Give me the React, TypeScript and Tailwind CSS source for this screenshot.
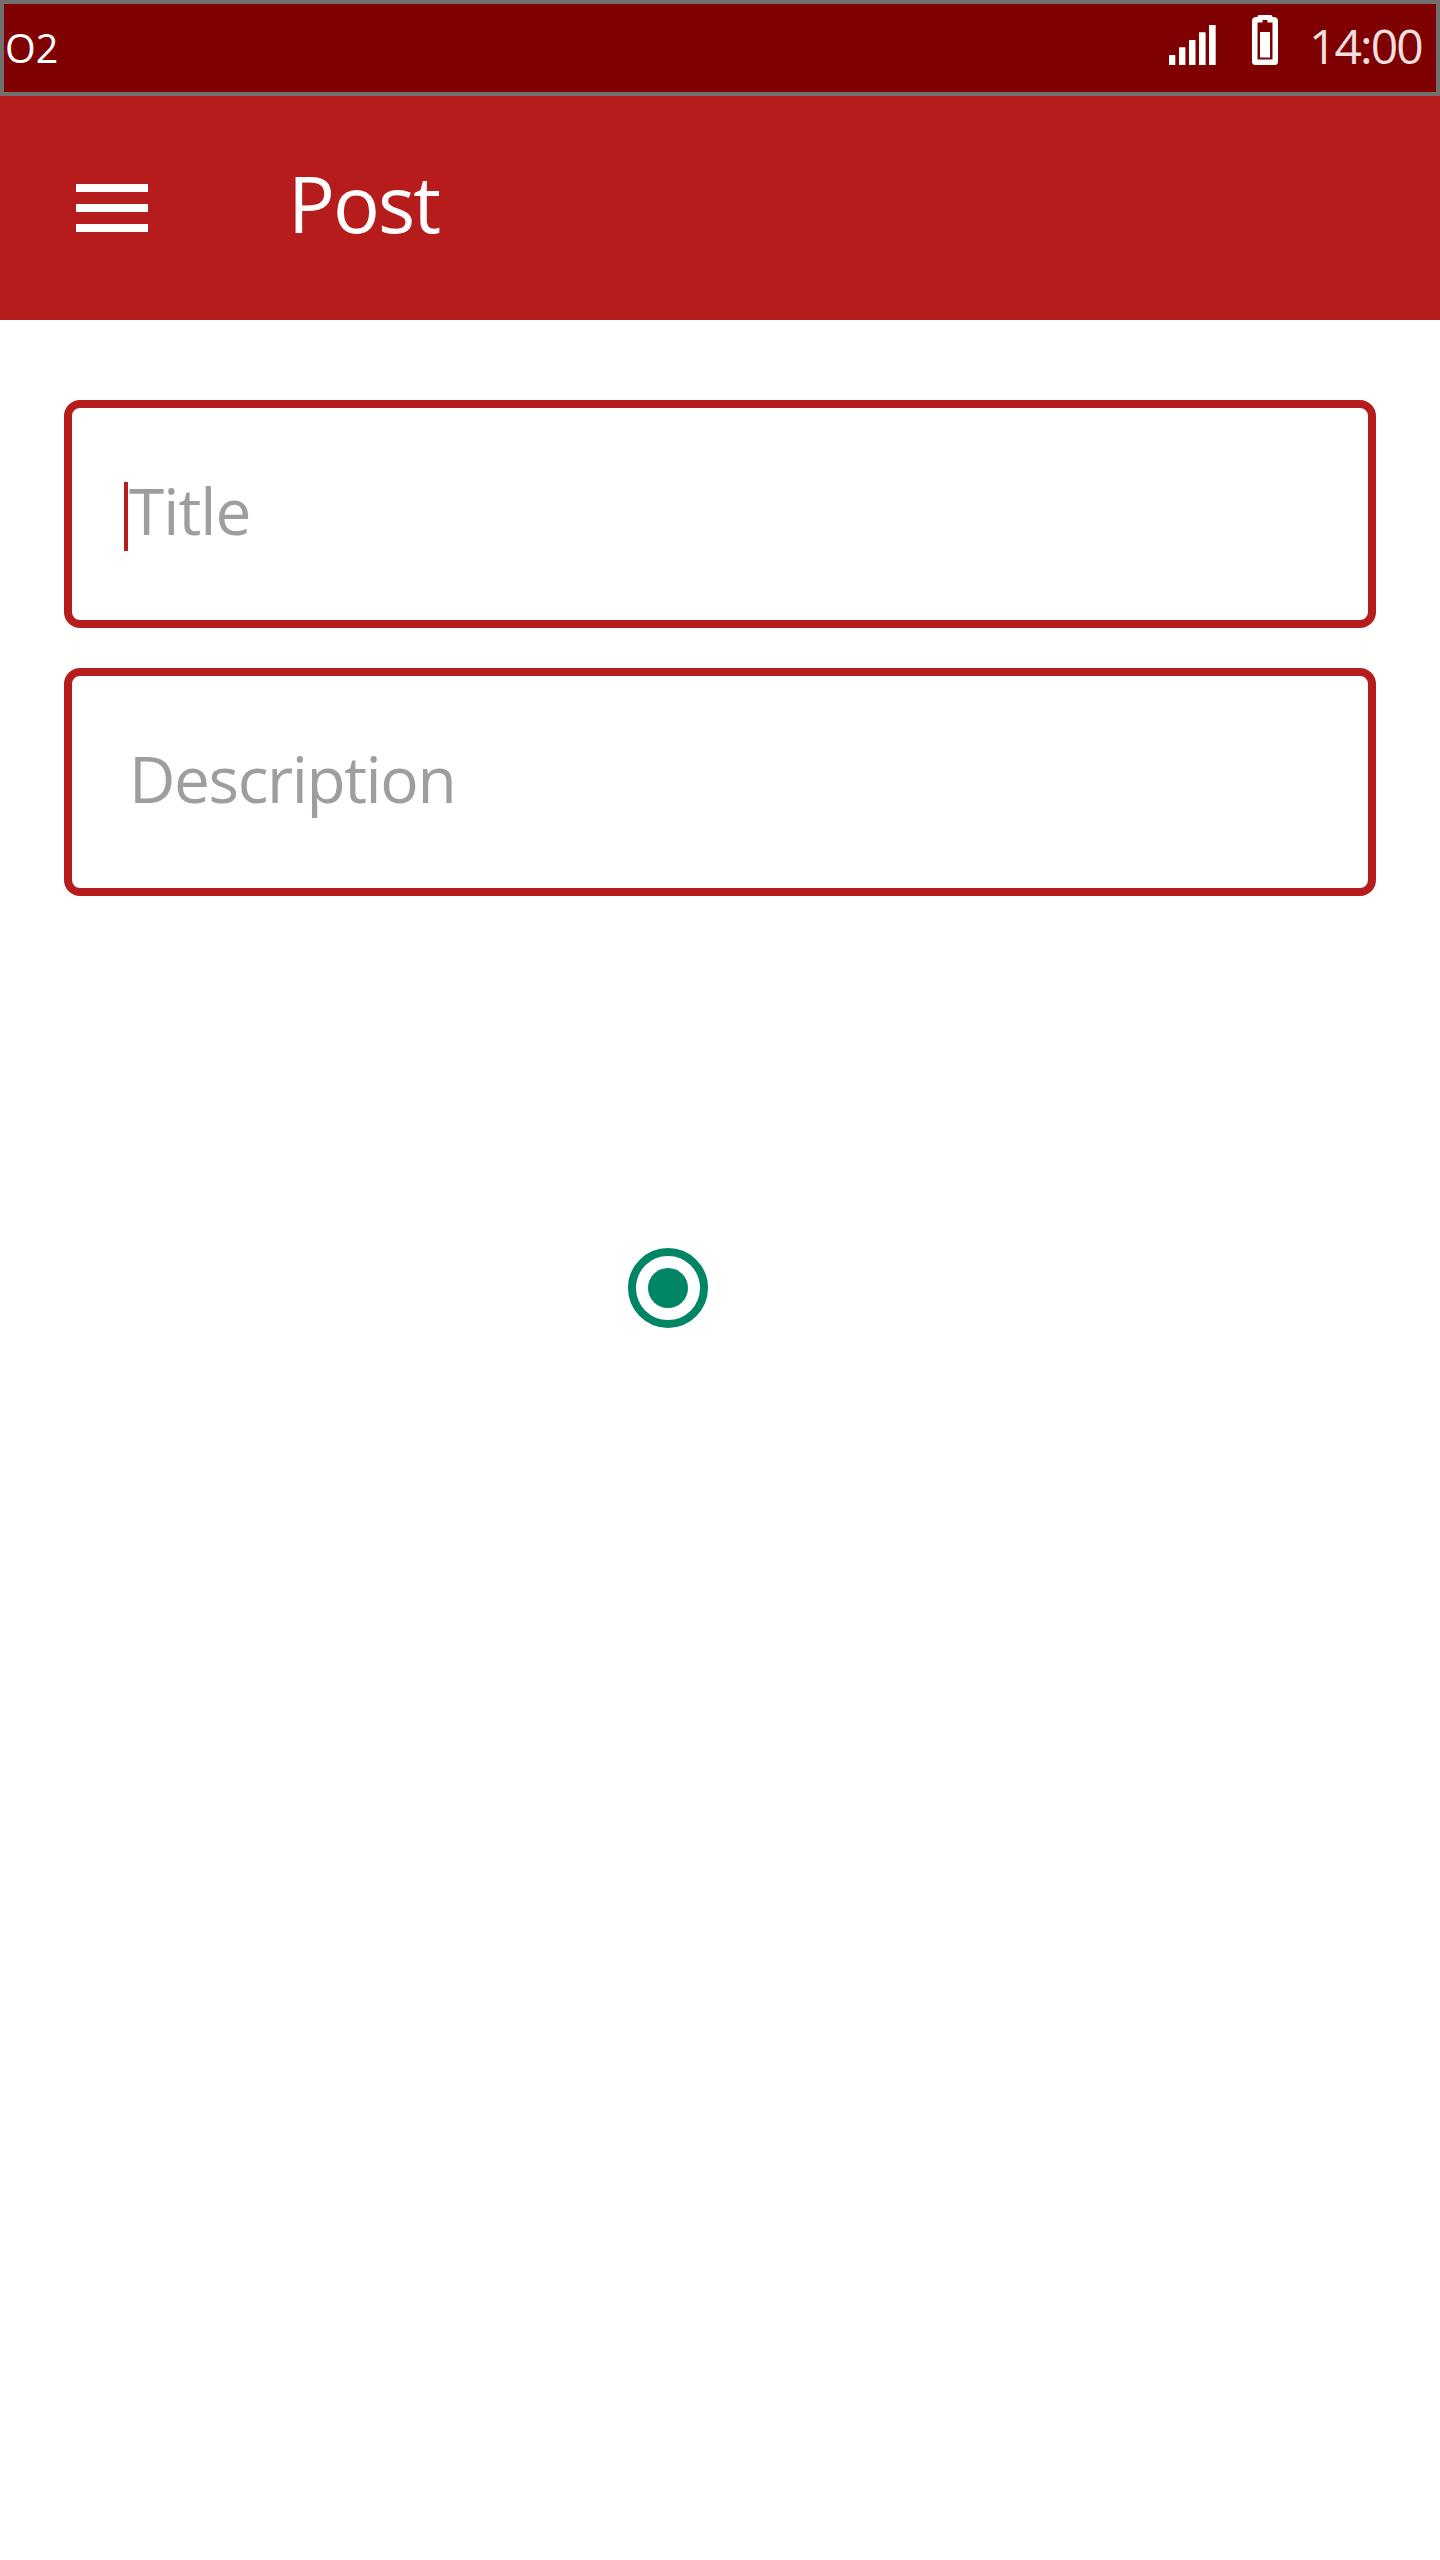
import React from 'react';

function SignalIcon() {
  return (
    <svg width="48" height="41" viewBox="0 0 48 41" fill="#fff" aria-hidden="true">
      <rect x="0" y="30" width="6.3" height="10" rx="0.6" />
      <rect x="10" y="22.3" width="6.4" height="17.7" rx="0.6" />
      <rect x="20" y="15" width="6.5" height="25" rx="0.6" />
      <rect x="30" y="7.3" width="6.6" height="32.7" rx="0.6" />
      <rect x="40" y="0" width="6.7" height="40" rx="0.6" />
    </svg>
  );
}

function BatteryIcon() {
  return (
    <svg width="26" height="50" viewBox="0 0 26 50" fill="#fff" aria-hidden="true">
      <path
        fillRule="evenodd"
        d="M7 0H19Q20.5 0 20.5 2H22.5Q26 2.5 26 6V46.5Q26 50 22.5 50H3.5Q0 50 0 46.5V6Q0 2.5 3.5 2H5.5Q5.5 0 7 0ZM10.500 5V7.500H5.500V44.500H20.500V7.500H15.500V5Z"
      />
      <rect x="8" y="17" width="10" height="25.500" />
    </svg>
  );
}

function StatusBar() {
  return (
    <div className="flex h-24 items-center border-4 border-[#707070] bg-[#7f0000] text-white">
      <span className="ml-px pt-px text-[39.5px] leading-none font-[370]">O2</span>
      <div className="ml-auto flex h-full items-start">
        <div className="mt-[21px] mr-[35px]">
          <SignalIcon />
        </div>
        <div className="mt-[11px] mr-[31px]">
          <BatteryIcon />
        </div>
        <span className="mt-[18px] w-[127px] text-[48px] leading-[48px] tracking-[-1.9px] text-white/88">14:00</span>
      </div>
    </div>
  );
}

function AppBar() {
  return (
    <header className="flex h-56 items-center bg-[#b71c1c] pl-[76px] text-white">
      <button aria-label="Menu" className="flex w-[72px] flex-col gap-3">
        <span className="h-2 bg-white" />
        <span className="h-2 bg-white" />
        <span className="h-2 bg-white" />
      </button>
      <h1 className="ml-[140px] pb-[11px] text-[78px] leading-none tracking-[-1.9px]">Post</h1>
    </header>
  );
}

function Field({ label, tracking, focused = false }: { label: string; tracking: string; focused?: boolean }) {
  return (
    <div className="relative flex h-[228px] items-center rounded-2xl border-8 border-[#b71c1c] pl-14">
      {focused && <span className="absolute top-[74px] left-[52px] h-[69px] w-1 bg-[#b71c1c]" />}
      <span className={`ml-px pb-[7px] text-[64px] leading-none font-[370] text-[#9e9e9e] ${tracking}`}>{label}</span>
    </div>
  );
}

export default function App() {
  return (
    <div className="flex h-[2560px] w-[1440px] flex-col bg-white font-['Open_Sans',sans-serif]">
      <StatusBar />
      <AppBar />
      <main className="flex flex-col gap-10 px-16 pt-20">
        <Field label="Title" tracking="tracking-[-1px]" focused />
        <Field label="Description" tracking="tracking-[-1.4px]" />
        <div className="mt-[312px] ml-[564px] flex size-20 items-center justify-center rounded-full border-8 border-[#008566]">
          <span className="size-10 rounded-full bg-[#008566]" />
        </div>
      </main>
    </div>
  );
}
